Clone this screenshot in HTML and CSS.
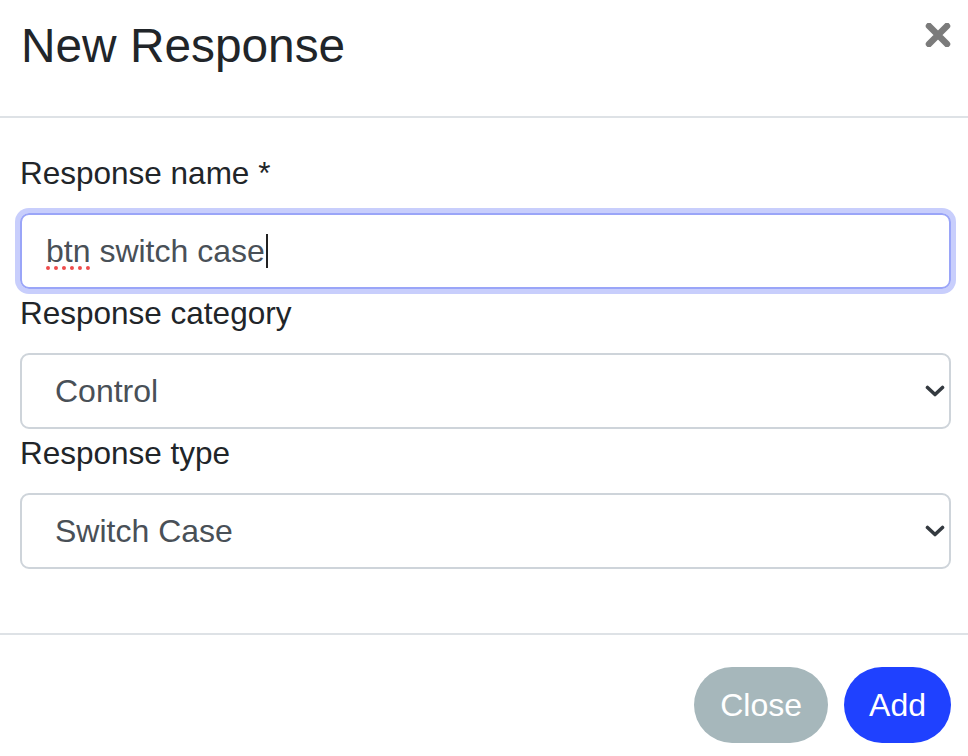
FILE: index.html
```html
<!DOCTYPE html>
<html lang="en">
<head>
<meta charset="utf-8">
<title>New Response</title>
<link rel="stylesheet" href="styles.css">
</head>
<body>
<div class="modal">
  <div class="modal-header">
    <h5 class="modal-title">New Response</h5>
    <button class="btn-x" type="button" aria-label="Close">
      <svg width="26" height="24" viewBox="0 0 26 24"><path d="M4 3 L22 21 M22 3 L4 21" stroke="#7b7b7b" stroke-width="6.5" stroke-linecap="round"/></svg>
    </button>
  </div>
  <div class="modal-body">
    <label class="form-label">Response name *</label>
    <div class="form-control focused" role="textbox"><span class="misspelled">btn</span> switch case<span class="caret"></span></div>
    <label class="form-label">Response category</label>
    <div class="select-wrap">
      <select class="form-select"><option>Control</option></select>
      <svg class="chevron" width="20" height="12" viewBox="0 0 20 12"><path d="M2.5 2.5 L10 9.5 L17.5 2.5" fill="none" stroke="#343a40" stroke-width="3.6" stroke-linecap="round" stroke-linejoin="round"/></svg>
    </div>
    <label class="form-label">Response type</label>
    <div class="select-wrap">
      <select class="form-select"><option>Switch Case</option></select>
      <svg class="chevron" width="20" height="12" viewBox="0 0 20 12"><path d="M2.5 2.5 L10 9.5 L17.5 2.5" fill="none" stroke="#343a40" stroke-width="3.6" stroke-linecap="round" stroke-linejoin="round"/></svg>
    </div>
  </div>
  <div class="modal-footer">
    <button class="btn btn-close" type="button">Close</button>
    <button class="btn btn-add" type="button">Add</button>
  </div>
</div>
</body>
</html>
```
FILE: styles.css
```css
html, body {
  margin: 0;
  padding: 0;
  background: #ffffff;
}
body {
  font-family: "Liberation Sans", Arial, Helvetica, sans-serif;
  color: #212529;
}
.modal {
  width: 968px;
  height: 756px;
  overflow: hidden;
}
.modal-header {
  box-sizing: border-box;
  height: 118px;
  padding: 17px 17px 0 21px;
  border-bottom: 2px solid #dee2e6;
  display: flex;
  justify-content: space-between;
  align-items: flex-start;
}
.modal-title {
  margin: 0;
  font-size: 47.8px;
  font-weight: 400;
  line-height: 1.2;
  color: #212529;
}
.btn-x {
  border: 0;
  background: none;
  padding: 0;
  margin-top: 6px;
  width: 26px;
  height: 24px;
  display: block;
}
.btn-x svg { display: block; }
.modal-body {
  padding: 31px 17px 64px 20px;
}
.form-label {
  display: block;
  font-size: 31.5px;
  line-height: 48px;
  margin-bottom: 16px;
  color: #212529;
}
.form-control {
  box-sizing: border-box;
  height: 76px;
  border: 2px solid #9aa5f8;
  border-radius: 9px;
  box-shadow: 0 0 0 5px #c8cefc;
  padding: 0 24px;
  font-size: 32px;
  color: #495057;
  display: flex;
  align-items: center;
  white-space: pre;
}
.misspelled {
  text-decoration: underline dotted #ef4b4b;
  text-decoration-thickness: 4px;
  text-underline-offset: 5px;
}
.caret {
  display: inline-block;
  width: 2px;
  height: 34px;
  background: #222;
  margin-left: 1px;
}
.select-wrap {
  position: relative;
}
.form-select {
  -webkit-appearance: none;
  appearance: none;
  box-sizing: border-box;
  width: 100%;
  height: 76px;
  border: 2px solid #ced4da;
  border-radius: 9px;
  background: #fff;
  padding: 0 60px 0 33px;
  font-family: "Liberation Sans", Arial, Helvetica, sans-serif;
  font-size: 32px;
  color: #495057;
  margin: 0;
  display: block;
}
.chevron {
  position: absolute;
  right: 6px;
  top: 32px;
  pointer-events: none;
}
.modal-footer {
  border-top: 2px solid #dee2e6;
  padding: 32px 17px 0 20px;
  display: flex;
  justify-content: flex-end;
  gap: 16px;
}
.btn {
  height: 76px;
  border: 0;
  border-radius: 38px;
  padding: 0 26px;
  font-family: "Liberation Sans", Arial, Helvetica, sans-serif;
  font-size: 32px;
  color: #ffffff;
}
.btn-close {
  background: #a6b7bb;
}
.btn-add {
  background: #1f41ff;
  padding: 0 25px;
}
```
